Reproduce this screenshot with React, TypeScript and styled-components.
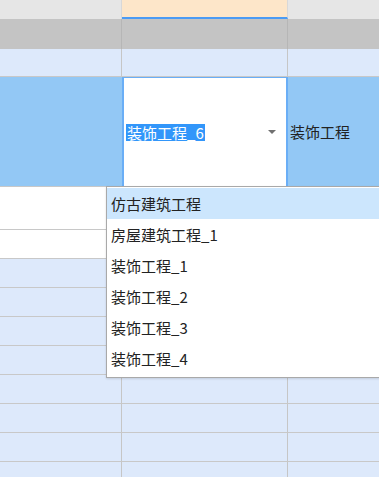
import * as React from 'react';
import styled, { createGlobalStyle } from 'styled-components';

const GlobalStyle = createGlobalStyle`
  html, body {
    margin: 0;
    padding: 0;
    background: #ffffff;
    overflow: hidden;
  }
  body {
    font-family: "Noto Sans CJK SC", "Noto Sans", sans-serif;
    font-size: 15px;
    color: #222222;
  }
  * {
    box-sizing: border-box;
  }
`;

const Sheet = styled.div`
  position: relative;
  width: 379px;
  height: 477px;
  overflow: hidden;
`;

const Row = styled.div<{ $height: number; $bg: string; $line?: string }>`
  display: grid;
  grid-template-columns: 122px 166px 1fr;
  height: ${({ $height }) => $height}px;
  background: ${({ $bg }) => $bg};
  border-bottom: ${({ $line }) => ($line ? `1px solid ${$line}` : 'none')};
`;

const Cell = styled.div<{ $bg?: string; $divider?: string }>`
  display: flex;
  align-items: center;
  min-width: 0;
  background: ${({ $bg }) => $bg || 'transparent'};
  border-right: 1px solid ${({ $divider }) => $divider || '#c6c6c6'};
`;

const HeaderActive = styled(Cell)`
  background: #fde6c9;
  border-bottom: 2px solid #4b9bf4;
`;

const Editor = styled.div`
  display: flex;
  align-items: center;
  justify-content: space-between;
  background: #ffffff;
  border-top: 1px solid #6aaef6;
  border-left: 2px solid #6aaef6;
  border-right: 2px solid #6aaef6;
  padding: 0 10px 0 2px;
`;

const SelectedText = styled.span`
  background: #3296fa;
  color: #ffffff;
  line-height: 17px;
  padding: 0 1px;
`;

const Caret = styled.span`
  width: 0;
  height: 0;
  border-left: 4px solid transparent;
  border-right: 4px solid transparent;
  border-top: 4px solid #707070;
`;

const CellText = styled.span`
  padding-left: 2px;
  color: #222222;
`;

const Dropdown = styled.ul`
  position: absolute;
  left: 106px;
  top: 186px;
  width: 300px;
  margin: 0;
  padding: 1px 0 3px;
  list-style: none;
  background: #ffffff;
  border: 1px solid #a9a9a9;
  box-shadow: 0 1px 2px rgba(0, 0, 0, 0.12);
`;

const Option = styled.li<{ $active?: boolean }>`
  height: 31px;
  line-height: 31px;
  padding-left: 4px;
  background: ${({ $active }) => ($active ? '#cce6fd' : '#ffffff')};
  color: #222222;
  white-space: nowrap;
`;

const options = ['仿古建筑工程', '房屋建筑工程_1', '装饰工程_1', '装饰工程_2', '装饰工程_3', '装饰工程_4'];

export default function App() {
  const blueRows = Array.from({ length: 8 });

  return (
    <Sheet>
      <GlobalStyle />
      <Row $height={19} $bg="#e6e6e6">
        <Cell $divider="#d8d8d8" />
        <HeaderActive $divider="#d8d8d8" />
        <Cell $divider="transparent" />
      </Row>
      <Row $height={30} $bg="#c4c4c4">
        <Cell $divider="#b6b6b6" />
        <Cell $divider="#b6b6b6" />
        <Cell $divider="transparent" />
      </Row>
      <Row $height={28} $bg="#dde9fb" $line="#c8c8c8">
        <Cell />
        <Cell />
        <Cell $divider="transparent" />
      </Row>
      <Row $height={110} $bg="#93c8f5" $line="#c8c8c8">
        <Cell $divider="#93c8f5" />
        <Editor>
          <SelectedText>装饰工程_6</SelectedText>
          <Caret />
        </Editor>
        <Cell $divider="transparent">
          <CellText>装饰工程</CellText>
        </Cell>
      </Row>
      <Row $height={43} $bg="#ffffff" $line="#c8c8c8">
        <Cell />
        <Cell />
        <Cell $divider="transparent" />
      </Row>
      <Row $height={29} $bg="#ffffff" $line="#c8c8c8">
        <Cell />
        <Cell />
        <Cell $divider="transparent" />
      </Row>
      {blueRows.map((_, i) => (
        <Row key={i} $height={29} $bg="#dde9fb" $line="#c8c8c8">
          <Cell />
          <Cell />
          <Cell $divider="transparent" />
        </Row>
      ))}
      <Dropdown>
        {options.map((o, i) => (
          <Option key={o} $active={i === 0}>{o}</Option>
        ))}
      </Dropdown>
    </Sheet>
  );
}
